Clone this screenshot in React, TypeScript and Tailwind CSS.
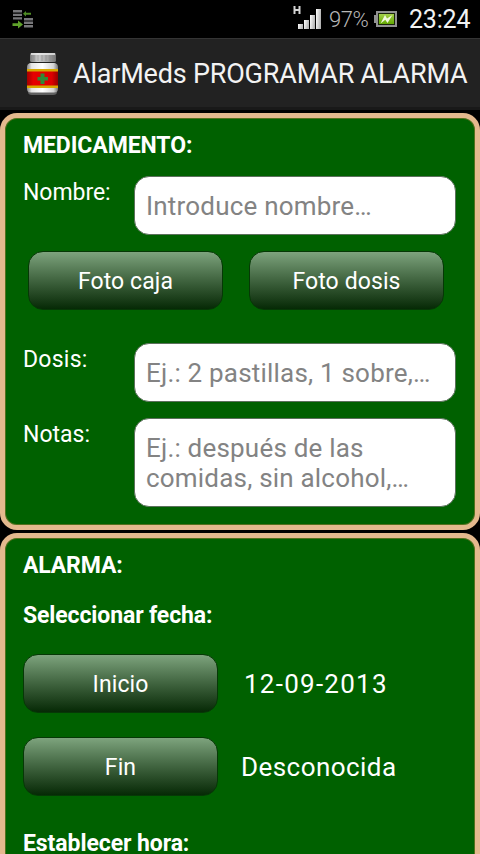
import type { ReactNode } from "react"
import clsx from "clsx"

function SyncIcon() {
  return (
    <svg width="22" height="20" viewBox="0 0 22 20">
      <g fill="#77777a">
        <path d="M1 1h9v2.600H1zM1 4.700h9v2.400H1zM1 8.200h9v2.400H1zM12 9h9v2.600h-9zM12 12.500h9v2.400h-9zM12 16h9v2.400h-9z" />
      </g>
      <path d="M11 4.800l3-2.800v1.800h5v2h-5v1.800z" fill="#4f8c24" />
      <path d="M0.500 14.200h5.500v-2.600l5 4-5 4V17H0.500z" fill="#5fa22a" />
    </svg>
  )
}

function SignalIcon() {
  return (
    <svg width="28" height="25" viewBox="0 0 28 25">
      <defs>
        <linearGradient id="bars" x1="0" y1="0" x2="1" y2="0.300">
          <stop offset="0" stopColor="#ffffff" />
          <stop offset="1" stopColor="#b5b5b5" />
        </linearGradient>
      </defs>
      <path d="M1.500 1v8M6.500 1v8M1.500 5h5" stroke="#d4d4d4" strokeWidth="2" fill="none" />
      <g fill="url(#bars)">
        <rect x="5" y="19" width="5" height="5" />
        <rect x="11" y="15" width="5" height="9" />
        <rect x="17" y="10" width="5" height="14" />
        <rect x="23" y="4" width="5" height="20" />
      </g>
    </svg>
  )
}

function BatteryIcon() {
  return (
    <svg width="23" height="17" viewBox="0 0 23 17">
      <defs>
        <linearGradient id="charge" x1="0" y1="0" x2="0" y2="1">
          <stop offset="0" stopColor="#a5d04a" />
          <stop offset="1" stopColor="#62a900" />
        </linearGradient>
      </defs>
      <path d="M0 4h2V0h21v16H2v-4H0z" fill="#929292" />
      <rect x="4" y="2" width="17" height="12" fill="#1c260d" />
      <rect x="5" y="3" width="15" height="10" fill="url(#charge)" />
      <path d="M6.500 12.500l4.500-8.500 2 3.500L18.500 4l-5 8-2.200-3.200z" fill="#f2f8df" />
    </svg>
  )
}

function PillBottle() {
  return (
    <svg width="32" height="43" viewBox="0 0 32 43">
      <defs>
        <linearGradient id="cap" x1="0" y1="0" x2="1" y2="0">
          <stop offset="0" stopColor="#777" />
          <stop offset="0.300" stopColor="#ccc" />
          <stop offset="0.650" stopColor="#aaa" />
          <stop offset="1" stopColor="#707070" />
        </linearGradient>
        <linearGradient id="glass" x1="0" y1="0" x2="1" y2="0">
          <stop offset="0" stopColor="#888" />
          <stop offset="0.150" stopColor="#e6e6e6" />
          <stop offset="0.500" stopColor="#fff" />
          <stop offset="0.850" stopColor="#d5d5d5" />
          <stop offset="1" stopColor="#777" />
        </linearGradient>
        <linearGradient id="label" x1="0" y1="0" x2="1" y2="0">
          <stop offset="0" stopColor="#a30000" />
          <stop offset="0.200" stopColor="#e60000" />
          <stop offset="0.800" stopColor="#dc0000" />
          <stop offset="1" stopColor="#950000" />
        </linearGradient>
      </defs>
      <path d="M1 37h29v2q0 3-4 3H5q-4 0-4-3z" fill="#606060" />
      <path d="M3 10h25q3 1 3 4v22q0 3.500-4 3.500H4q-4 0-4-3.500V14q0-3 3-4z" fill="url(#glass)" />
      <rect x="3" y="0" width="26" height="9" rx="1.500" fill="url(#cap)" />
      <path d="M4 1h24" stroke="#eee" strokeWidth="1.500" />
      <path d="M7 2v6M11 2v6M15 2v6M19 2v6M23 2v6M27 2v6" stroke="#888" strokeWidth="0.600" />
      <rect x="0" y="16" width="31" height="19" fill="#d6a800" />
      <rect x="0" y="18.500" width="31" height="14" fill="url(#label)" />
      <path d="M13.500 20.500h4v3.500h3.500v3.500h-3.500V31h-4v-3.500H10.500V24h3z" fill="#2f8a35" />
    </svg>
  )
}

function StatusBar() {
  return (
    <header className="flex h-[38px] shrink-0 items-start bg-black">
      <div className="pt-[9px] pl-3">
        <SyncIcon />
      </div>
      <div className="ml-auto flex pr-[10px]">
        <div className="pt-[5px]">
          <SignalIcon />
        </div>
        <span className="ml-2 w-[40px] pt-[7px] text-[22px] leading-[26px] font-light tracking-[-0.500px] whitespace-nowrap text-[#b8b8b8]">
          97%
        </span>
        <div className="ml-[5px] pt-[11px]">
          <BatteryIcon />
        </div>
        <span className="ml-3 w-[61px] pt-[5px] text-[25px] leading-[30px] tracking-[-0.200px] whitespace-nowrap text-[#f2f2f2]">
          23:24
        </span>
      </div>
    </header>
  )
}

function TitleBar() {
  return (
    <div className="flex h-[72px] shrink-0 items-start border-t border-b-[3px] border-t-[#343434] border-b-[#191919] bg-[#222222] pl-[27px]">
      <div className="pt-[14px]">
        <PillBottle />
      </div>
      <h1 className="ml-[14px] pt-[18px] text-[27px] leading-[34px] tracking-[-0.200px] whitespace-nowrap text-[#f3f3f3]">
        AlarMeds PROGRAMAR ALARMA
      </h1>
    </div>
  )
}

function Panel({ className, children }: { className?: string; children: ReactNode }) {
  return (
    <section
      className={clsx(
        "shrink-0 rounded-[17px] border-[5px] border-[#e4b98e] bg-[#006100] pl-[18px] shadow-[inset_0_0_0_1px_#55701d]",
        className
      )}
    >
      {children}
    </section>
  )
}

function Field({ className, children }: { className?: string; children: ReactNode }) {
  return (
    <div
      className={clsx(
        "w-[322px] rounded-[15px] border border-[#5c705c] bg-white pl-[11px] text-[26px] leading-[30px] tracking-[0.200px] whitespace-nowrap text-[#838383]",
        className
      )}
    >
      {children}
    </div>
  )
}

function GlossyButton({ children }: { children: ReactNode }) {
  return (
    <button
      type="button"
      className="h-[59px] w-[195px] rounded-[15px] border border-[#063806] bg-linear-to-b from-[#80a680] to-[#042804] bg-origin-border pt-[3px] text-[23px] leading-[30px] tracking-[0.100px] text-white"
    >
      {children}
    </button>
  )
}

export default function App() {
  return (
    <div className="flex h-[854px] w-[480px] flex-col overflow-hidden bg-black font-['Roboto',sans-serif]">
      <StatusBar />
      <TitleBar />

      <Panel className="mt-[3px] h-[417px] pt-[13px]">
        <h2 className="text-[23px] leading-[30px] font-bold tracking-[-0.100px] text-white">MEDICAMENTO:</h2>
        <div className="mt-[15px] flex">
          <span className="w-[111px] pt-[2px] text-[23px] leading-[30px] tracking-[-0.050px] text-white">Nombre:</span>
          <Field className="h-[59px] pt-[14px]">Introduce nombre…</Field>
        </div>
        <div className="mt-[16px] ml-[5px] flex gap-[26px]">
          <GlossyButton>Foto caja</GlossyButton>
          <GlossyButton>Foto dosis</GlossyButton>
        </div>
        <div className="mt-[33px] flex">
          <span className="w-[111px] pt-[2px] text-[23px] leading-[30px] tracking-[0.250px] text-white">Dosis:</span>
          <Field className="h-[59px] pt-[14px]">Ej.: 2 pastillas, 1 sobre,…</Field>
        </div>
        <div className="mt-[16px] flex">
          <span className="w-[111px] pt-[2px] text-[23px] leading-[30px] text-white">Notas:</span>
          <Field className="h-[89px] pt-[14px]">
            Ej.: después de las
            <br />
            comidas, sin alcohol,…
          </Field>
        </div>
      </Panel>

      <Panel className="mt-[3px] h-[440px] pt-[13px]">
        <h2 className="text-[23px] leading-[30px] font-bold tracking-[-0.150px] text-white">ALARMA:</h2>
        <h3 className="mt-[20px] text-[23px] leading-[30px] font-bold tracking-[-0.120px] text-white">Seleccionar fecha:</h3>
        <div className="mt-[23px] flex items-center">
          <GlossyButton>Inicio</GlossyButton>
          <span className="ml-[26px] text-[26px] leading-[30px] tracking-[1.250px] text-white">12-09-2013</span>
        </div>
        <div className="mt-[24px] flex items-center">
          <GlossyButton>Fin</GlossyButton>
          <span className="ml-[23px] text-[26px] leading-[30px] tracking-[0.450px] text-white">Desconocida</span>
        </div>
        <h3 className="mt-[37px] text-[23px] leading-[22px] font-bold tracking-[-0.080px] text-white">Establecer hora:</h3>
      </Panel>
    </div>
  )
}
